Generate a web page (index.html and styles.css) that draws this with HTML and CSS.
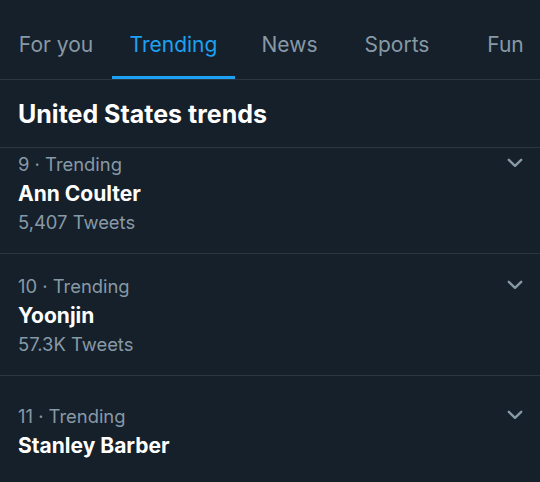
FILE: index.html
```html
<!DOCTYPE html>
<html lang="en">
<head>
<meta charset="utf-8">
<title>Trending</title>
<link rel="stylesheet" href="styles.css">
</head>
<body>
<nav class="tabs">
  <div class="tab">For you</div>
  <div class="tab active">Trending</div>
  <div class="tab">News</div>
  <div class="tab">Sports</div>
  <div class="tab">Fun</div>
</nav>
<h2 class="section-title">United States trends</h2>
<div class="viewport">
  <div class="list">
    <div class="trend">
      <div class="trend-text">
        <div class="meta">9 · Trending</div>
        <div class="name">Ann Coulter</div>
        <div class="meta">5,407 Tweets</div>
      </div>
      <svg class="chev" width="16" height="10" viewBox="0 0 16 10"><polyline points="1.8,1.8 8,7.8 14.2,1.8" fill="none" stroke="#8899a6" stroke-width="2.4" stroke-linecap="round" stroke-linejoin="round"/></svg>
    </div>
    <div class="trend">
      <div class="trend-text">
        <div class="meta">10 · Trending</div>
        <div class="name">Yoonjin</div>
        <div class="meta">57.3K Tweets</div>
      </div>
      <svg class="chev" width="16" height="10" viewBox="0 0 16 10"><polyline points="1.8,1.8 8,7.8 14.2,1.8" fill="none" stroke="#8899a6" stroke-width="2.4" stroke-linecap="round" stroke-linejoin="round"/></svg>
    </div>
    <div class="trend trend-short">
      <div class="trend-text">
        <div class="meta">11 · Trending</div>
        <div class="name">Stanley Barber</div>
      </div>
      <svg class="chev" width="16" height="10" viewBox="0 0 16 10"><polyline points="1.8,1.8 8,7.8 14.2,1.8" fill="none" stroke="#8899a6" stroke-width="2.4" stroke-linecap="round" stroke-linejoin="round"/></svg>
    </div>
  </div>
</div>
</body>
</html>
```
FILE: styles.css
```css
html, body {
  margin: 0;
  padding: 0;
  background: #15202b;
  height: 100%;
  overflow: hidden;
}
body {
  font-family: Inter, Roboto, "Liberation Sans", sans-serif;
  color: #ffffff;
}
.tabs {
  display: grid;
  grid-template-columns: 112px 123px 109px 106px 111px;
  height: 79px;
  border-bottom: 1px solid #2b3640;
  overflow: hidden;
}
.tab {
  position: relative;
  box-sizing: border-box;
  height: 80px;
  padding-top: 31px;
  text-align: center;
  font-size: 21px;
  line-height: 28px;
  color: #8899a6;
  white-space: nowrap;
}
.tab.active {
  color: #1da1f2;
}
.tab.active::after {
  content: "";
  position: absolute;
  left: 0;
  right: 0;
  bottom: 0;
  height: 4px;
  background: #1da1f2;
}
.section-title {
  margin: 0;
  padding: 18px 18px 17px;
  font-size: 25px;
  line-height: 32px;
  font-weight: 700;
  border-bottom: 1px solid #2b3640;
}
.viewport {
  overflow: hidden;
}
.list {
  margin-top: -16px;
}
.trend {
  display: flex;
  align-items: flex-start;
  justify-content: space-between;
  padding: 18px 17px 16px 18px;
  border-bottom: 1px solid #2b3640;
}
.trend-short {
  padding-top: 26px;
  padding-bottom: 30px;
}
.meta {
  font-size: 18.4px;
  line-height: 29px;
  color: #8899a6;
}
.name {
  font-size: 21px;
  line-height: 29px;
  font-weight: 700;
  color: #ffffff;
}
.chev {
  display: block;
  margin-top: 8px;
}
```
